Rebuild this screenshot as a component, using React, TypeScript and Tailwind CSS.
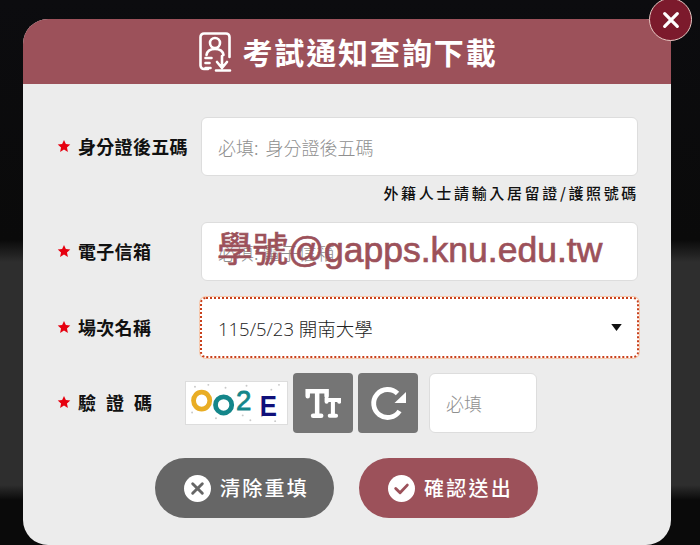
const cjk = "font-['Noto_Sans_CJK_TC','Noto_Sans',sans-serif]"

function Star() {
  return (
    <svg viewBox="0 0 24 24" className="h-[14px] w-[14px] shrink-0" aria-hidden="true">
      <path d="M12 1.5l3.2 7.1 7.6.8-5.7 5.1 1.6 7.6L12 18.2l-6.700 3.900 1.600-7.600L1.200 9.400l7.600-.8z" fill="#e6000f" />
    </svg>
  )
}

function FieldLabel({ children, spaced }: { children: string; spaced?: boolean }) {
  return (
    <div className="flex w-[144px] shrink-0 items-center gap-[7px] pb-[2px]">
      <Star />
      <span className={`text-[18px] font-bold leading-none text-[#111] ${spaced ? 'tracking-[10px]' : 'tracking-[0.3px]'}`}>
        {children}
      </span>
    </div>
  )
}

function ExamIcon() {
  return (
    <svg viewBox="0 0 34 40" className="h-[40px] w-[34px]" fill="none" stroke="white" strokeWidth="2.600" strokeLinecap="round" strokeLinejoin="round" aria-hidden="true">
      <path d="M9 37H5a3.500 3.500 0 0 1-3.500-3.500V5A3.500 3.500 0 0 1 5 1.500h22A3.500 3.500 0 0 1 30.500 5v20" />
      <circle cx="16" cy="11" r="5" />
      <path d="M7.500 23c.6-4 4-6 8.500-6s7.900 2 8.500 6" />
      <path d="M6.500 26h6M6.500 31h4M6.500 36h5" />
      <path d="M23 24v12M18 30l5 6 5-6M17 38.500h14" />
    </svg>
  )
}

function Captcha() {
  return (
    <svg viewBox="0 0 103 44" className="h-[44px] w-[103px] shrink-0 border border-[#dddddd] bg-white" aria-hidden="true">
      <g fill="#c9c9c9">
        <circle cx="8" cy="5" r="1" /><circle cx="22" cy="3" r="1" /><circle cx="40" cy="6" r="1" /><circle cx="62" cy="4" r="1" />
        <circle cx="88" cy="8" r="1" /><circle cx="96" cy="3" r="1" /><circle cx="5" cy="32" r="1" /><circle cx="30" cy="38" r="1" />
        <circle cx="58" cy="35" r="1" /><circle cx="66" cy="40" r="1" /><circle cx="78" cy="36" r="1" /><circle cx="92" cy="41" r="1" />
      </g>
      <ellipse cx="15" cy="19.500" rx="8.500" ry="9" fill="none" stroke="#e9ad24" strokeWidth="5" />
      <ellipse cx="38" cy="24" rx="8.500" ry="8.500" fill="none" stroke="#14868a" strokeWidth="5" />
      <text x="51" y="29" fontFamily="Liberation Sans" fontSize="29" fill="#14868a" stroke="#14868a" strokeWidth="0.800">2</text>
      <text x="76" y="36" fontFamily="Liberation Sans" fontWeight="700" fontSize="31" fill="#10107a" textLength="18" lengthAdjust="spacingAndGlyphs">E</text>
    </svg>
  )
}

function TextSizeIcon() {
  return (
    <svg viewBox="0 0 40 34" className="h-[31px] w-[36px]" fill="none" stroke="white" strokeLinecap="round" aria-hidden="true">
      <path d="M3 9V3.500h21V9M13.500 3.500v27" strokeWidth="5" />
      <path d="M9 30.500h9" strokeWidth="5" />
      <path d="M24 15v-2h14v2M31 13v17.500M27.500 30.500h7" strokeWidth="4.500" />
    </svg>
  )
}

function RefreshIcon() {
  return (
    <svg viewBox="0 0 36 36" className="h-[36px] w-[36px]" fill="none" aria-hidden="true">
      <path d="M27.500 8.500A14 14 0 1 0 29.500 26" stroke="white" strokeWidth="4.800" />
      <path d="M36 7v11H24.500z" fill="white" />
    </svg>
  )
}

export default function App() {
  return (
    <div className={`h-[545px] w-[700px] overflow-hidden bg-[linear-gradient(180deg,#0c0c0f_0,#0a0a0a_240px,#2e2e2e_262px,#2e2e2e_485px,#0a0a0a_500px)] pl-[23px] pt-[19px] ${cjk}`}>
      <div className="relative h-[526px] w-[648px] rounded-[25px] bg-[#ececec]">
        <button className="absolute -right-[21px] -top-[21px] flex h-[43px] w-[43px] items-center justify-center rounded-full border border-[#e8c9c4] bg-[#7c1a2c]">
          <svg viewBox="0 0 20 20" className="h-[18px] w-[18px]" stroke="white" strokeWidth="3.600" strokeLinecap="round" aria-hidden="true">
            <path d="M3 3l14 14M17 3L3 17" />
          </svg>
        </button>

        <div className="flex h-[65px] items-center justify-center gap-[9px] rounded-t-[25px] bg-[#9c515a] pl-[3px]">
          <ExamIcon />
          <h1 className="text-[30px] font-bold tracking-[1.900px] text-white">考試通知查詢下載</h1>
        </div>

        <div className="pl-[34px] pr-[33px] pt-[33px]">
          <div className="flex items-center">
            <FieldLabel>身分證後五碼</FieldLabel>
            <input
              placeholder="必填: 身分證後五碼"
              className="h-[59px] w-full rounded-[6px] border border-[#dddddd] bg-white px-4 text-[18px] font-light outline-none [word-spacing:3px] placeholder:text-[#8f8f8f]"
            />
          </div>
          <p className="-mr-[1px] mt-[7px] h-[39px] text-right text-[15px] font-medium leading-[20px] tracking-[2.650px] text-[#111]">
            外籍人士請輸入居留證/護照號碼
          </p>

          <div className="flex items-center">
            <FieldLabel>電子信箱</FieldLabel>
            <div className="relative w-full">
              <input
                placeholder="必填: 電子信箱"
                className="h-[59px] w-full rounded-[6px] border border-[#dddddd] bg-white px-4 text-[18px] font-light outline-none placeholder:text-[#8f8f8f]"
              />
              <span className="pointer-events-none absolute left-[16px] top-[6px] whitespace-nowrap font-['Liberation_Sans','Noto_Sans_CJK_TC',sans-serif] text-[35.500px] leading-[44px] text-[#9c515a] [-webkit-text-stroke:0.7px_#9c515a]">
                學號@gapps.knu.edu.tw
              </span>
            </div>
          </div>

          <div className="mt-[16px] flex items-center">
            <FieldLabel>場次名稱</FieldLabel>
            <div className="relative -mx-px w-[439px] shrink-0">
              <select className="h-[61px] w-full appearance-none rounded-[6px] border-2 border-dotted border-[#c8401c] bg-white px-[16px] pt-[2px] font-['Open_Sans','Noto_Sans_CJK_TC',sans-serif] text-[18.500px] font-light text-[#222] shadow-[0_0_0_1px_#f6c9ae] outline-none">
                <option>115/5/23 開南大學</option>
              </select>
              <svg viewBox="0 0 12 8" className="pointer-events-none absolute right-[17px] top-[27px] h-[7px] w-[11px]" aria-hidden="true">
                <path d="M0 0h12L6 8z" fill="#111" />
              </svg>
            </div>
          </div>

          <div className="mt-[15px] flex items-center">
            <div className="w-[128px] shrink-0">
              <FieldLabel spaced>驗證碼</FieldLabel>
            </div>
            <Captcha />
            <button className="ml-[5px] flex h-[60px] w-[60px] shrink-0 items-center justify-center rounded-[4px] bg-[#757575]">
              <TextSizeIcon />
            </button>
            <button className="ml-[5px] flex h-[60px] w-[60px] shrink-0 items-center justify-center rounded-[4px] bg-[#757575]">
              <RefreshIcon />
            </button>
            <input
              placeholder="必填"
              className="ml-[11px] h-[60px] w-[108px] rounded-[6px] border border-[#dddddd] bg-white px-4 text-[18px] font-light outline-none placeholder:text-[#8f8f8f]"
            />
          </div>

          <div className="mt-[25px] flex justify-center gap-[25px] pr-[3px]">
            <button className="flex h-[60px] w-[179px] items-center justify-center gap-[9px] rounded-full bg-[#666666] pl-[5px] text-[20px] font-medium tracking-[2.200px] text-white">
              <svg viewBox="0 0 28 28" className="h-[27px] w-[27px]" aria-hidden="true">
                <circle cx="14" cy="14" r="14" fill="white" />
                <path d="M9 9l10 10M19 9L9 19" stroke="#666666" strokeWidth="3" strokeLinecap="round" />
              </svg>
              清除重填
            </button>
            <button className="flex h-[60px] w-[179px] items-center justify-center gap-[9px] rounded-full bg-[#9c515a] pl-[5px] text-[20px] font-medium tracking-[2.200px] text-white">
              <svg viewBox="0 0 28 28" className="h-[27px] w-[27px]" aria-hidden="true">
                <circle cx="14" cy="14" r="14" fill="white" />
                <path d="M8 14l4.500 4.500L20 10.500" fill="none" stroke="#9c515a" strokeWidth="3" strokeLinecap="round" strokeLinejoin="round" />
              </svg>
              確認送出
            </button>
          </div>
        </div>
      </div>
    </div>
  )
}
